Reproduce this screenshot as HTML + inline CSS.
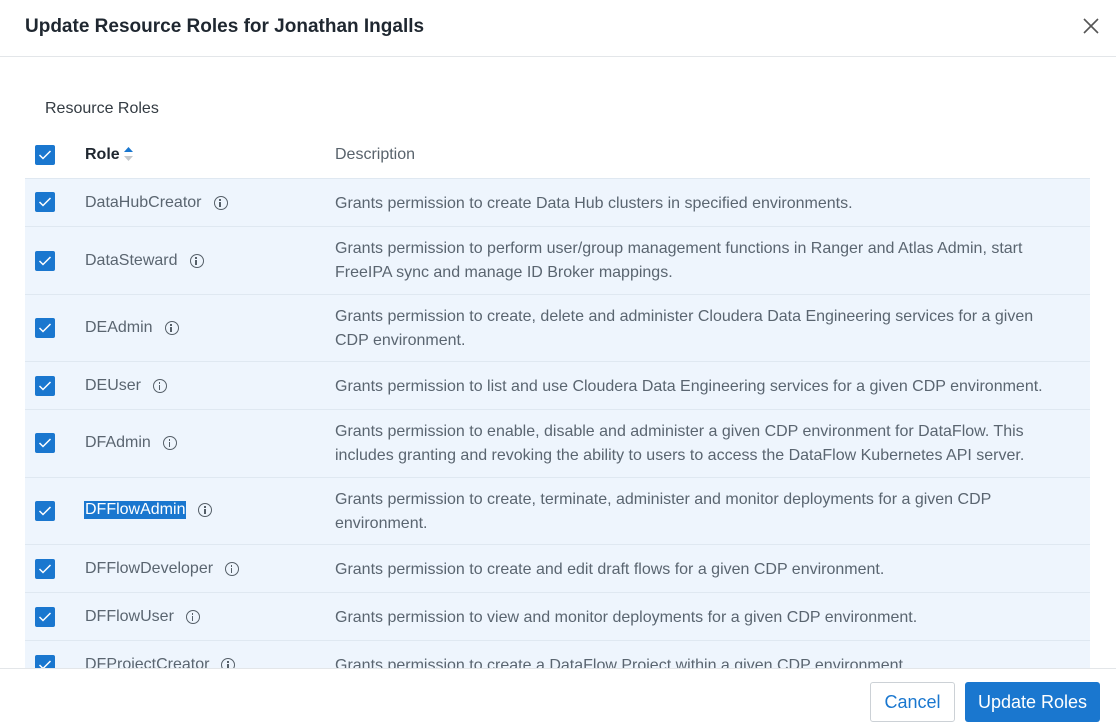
<!DOCTYPE html>
<html><head><meta charset="utf-8"><style>
*{box-sizing:border-box;margin:0;padding:0}
body{width:1116px;height:728px;overflow:hidden;background:#fff;font-family:"Liberation Sans",Arial,sans-serif;position:relative;color:#59636c}
.title{position:absolute;left:25px;top:16px;font-size:19px;font-weight:bold;color:#1f2730;letter-spacing:0}
.close{position:absolute;left:1082px;top:17px}
.hl{position:absolute;left:0;right:0;height:1px;background:#e3e6e9}
.rr{position:absolute;left:45px;top:100px;font-size:16px;color:#333b42}
.cb{position:absolute;left:35px;width:20px;height:20px;background:#1a77cf;border-radius:2px}
.cb svg{position:absolute;left:3px;top:4px}
.th{position:absolute;top:146px;font-size:16px;font-weight:bold}
.row{position:absolute;left:25px;width:1065px;background:#eef5fd;border-top:1px solid #dfe8f1}
.role{position:absolute;left:60px;font-size:16px;color:#5a6570;display:flex;align-items:center}
.role i{display:inline-block;width:14px;height:14px;border:1.5px solid #555f68;border-radius:50%;margin-left:12px;position:relative;font-style:normal}
.role i:before{content:"";position:absolute;left:4.75px;top:5px;width:1.5px;height:5px;background:#555f68}
.role i:after{content:"";position:absolute;left:4.75px;top:2px;width:1.5px;height:1.5px;background:#555f68}
.desc{position:absolute;left:310px;font-size:16px;line-height:24px;color:#5a6570;width:712px}
.sel{background:#1a77cf;color:#fff;padding:0 1px;margin-left:-1px}
.btn{position:absolute;top:682px;height:40px;border-radius:3px;font-size:18px;display:flex;align-items:center;justify-content:center}
</style></head><body>
<div class="title">Update Resource Roles for Jonathan Ingalls</div>
<svg class="close" width="18" height="18" viewBox="0 0 18 18"><path d="M2 2L16 16M16 2L2 16" stroke="#555" stroke-width="1.6"/></svg>
<div class="hl" style="top:56px"></div>
<div class="rr">Resource Roles</div>
<div class="cb" style="top:145px"><svg width="14" height="12" viewBox="0 0 14 12"><path d="M1.5 6L5 9.5L12.5 2" stroke="#fff" stroke-width="1.5" fill="none"/></svg></div>
<div class="th" style="left:85px;color:#1f2730">Role</div>
<svg style="position:absolute;left:123px;top:146px" width="11" height="16" viewBox="0 0 11 16"><path d="M5.5 1L10 6H1z" fill="#1a77cf"/><path d="M5.5 15L10 10H1z" fill="#c4c8cc"/></svg>
<div class="th" style="left:335px;color:#59636c;font-weight:normal">Description</div>

<div class="row" style="top:178px;height:48px"><div class="role" style="top:15px">DataHubCreator<i></i></div><div class="desc" style="top:13px">Grants permission to create Data Hub clusters in specified environments.</div></div>
<div class="row" style="top:226px;height:68px"><div class="role" style="top:25px">DataSteward<i></i></div><div class="desc" style="top:10px">Grants permission to perform user/group management functions in Ranger and Atlas Admin, start FreeIPA sync and manage ID Broker mappings.</div></div>
<div class="row" style="top:294px;height:67px"><div class="role" style="top:24px">DEAdmin<i></i></div><div class="desc" style="top:10px">Grants permission to create, delete and administer Cloudera Data Engineering services for a given CDP environment.</div></div>
<div class="row" style="top:361px;height:48px"><div class="role" style="top:15px">DEUser<i></i></div><div class="desc" style="top:13px;width:740px">Grants permission to list and use Cloudera Data Engineering services for a given CDP environment.</div></div>
<div class="row" style="top:409px;height:68px"><div class="role" style="top:24px">DFAdmin<i></i></div><div class="desc" style="top:10px">Grants permission to enable, disable and administer a given CDP environment for DataFlow. This includes granting and revoking the ability to users to access the DataFlow Kubernetes API server.</div></div>
<div class="row" style="top:477px;height:67px"><div class="role" style="top:23px"><span class="sel">DFFlowAdmin</span><i></i></div><div class="desc" style="top:10px">Grants permission to create, terminate, administer and monitor deployments for a given CDP environment.</div></div>
<div class="row" style="top:544px;height:48px"><div class="role" style="top:15px">DFFlowDeveloper<i></i></div><div class="desc" style="top:13px">Grants permission to create and edit draft flows for a given CDP environment.</div></div>
<div class="row" style="top:592px;height:48px"><div class="role" style="top:15px">DFFlowUser<i></i></div><div class="desc" style="top:13px">Grants permission to view and monitor deployments for a given CDP environment.</div></div>
<div class="row" style="top:640px;height:28px;overflow:hidden"><div class="role" style="top:15px">DFProjectCreator<i></i></div><div class="desc" style="top:13px">Grants permission to create a DataFlow Project within a given CDP environment.</div></div>

<div class="cb" style="top:192px"><svg width="14" height="12" viewBox="0 0 14 12"><path d="M1.5 6L5 9.5L12.5 2" stroke="#fff" stroke-width="1.5" fill="none"/></svg></div>
<div class="cb" style="top:251px"><svg width="14" height="12" viewBox="0 0 14 12"><path d="M1.5 6L5 9.5L12.5 2" stroke="#fff" stroke-width="1.5" fill="none"/></svg></div>
<div class="cb" style="top:318px"><svg width="14" height="12" viewBox="0 0 14 12"><path d="M1.5 6L5 9.5L12.5 2" stroke="#fff" stroke-width="1.5" fill="none"/></svg></div>
<div class="cb" style="top:376px"><svg width="14" height="12" viewBox="0 0 14 12"><path d="M1.5 6L5 9.5L12.5 2" stroke="#fff" stroke-width="1.5" fill="none"/></svg></div>
<div class="cb" style="top:433px"><svg width="14" height="12" viewBox="0 0 14 12"><path d="M1.5 6L5 9.5L12.5 2" stroke="#fff" stroke-width="1.5" fill="none"/></svg></div>
<div class="cb" style="top:501px"><svg width="14" height="12" viewBox="0 0 14 12"><path d="M1.5 6L5 9.5L12.5 2" stroke="#fff" stroke-width="1.5" fill="none"/></svg></div>
<div class="cb" style="top:559px"><svg width="14" height="12" viewBox="0 0 14 12"><path d="M1.5 6L5 9.5L12.5 2" stroke="#fff" stroke-width="1.5" fill="none"/></svg></div>
<div class="cb" style="top:607px"><svg width="14" height="12" viewBox="0 0 14 12"><path d="M1.5 6L5 9.5L12.5 2" stroke="#fff" stroke-width="1.5" fill="none"/></svg></div>
<div style="position:absolute;left:35px;top:655px;width:20px;height:13px;overflow:hidden"><div class="cb" style="left:0;top:0"><svg width="14" height="12" viewBox="0 0 14 12"><path d="M1.5 6L5 9.5L12.5 2" stroke="#fff" stroke-width="1.5" fill="none"/></svg></div></div>

<div style="position:absolute;left:0;top:668px;width:1116px;height:60px;background:#fff;border-top:1px solid #e3e6e9"></div>
<div class="btn" style="left:870px;width:85px;border:1px solid #ccd1d6;color:#1a77cf;background:#fff">Cancel</div>
<div class="btn" style="left:965px;width:135px;background:#1a77cf;color:#fff">Update Roles</div>
</body></html>
